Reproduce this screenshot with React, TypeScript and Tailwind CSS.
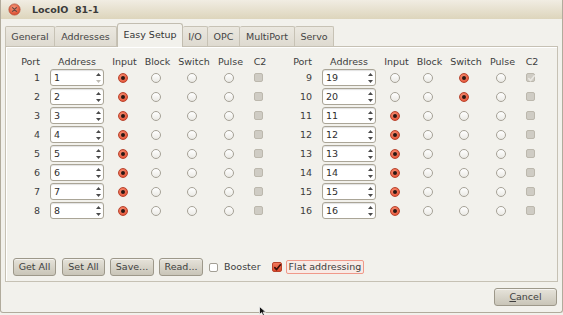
import React from "react";

const font = { fontFamily: '"DejaVu Sans", "Liberation Sans", sans-serif' };

function Radio({ on }: { on: boolean }) {
  if (on) {
    return (
      <span className="w-[10px] h-[10px] rounded-full border border-[#b9432c] bg-[radial-gradient(circle_at_40%_35%,#f88f74,#df4629)] flex items-center justify-center">
        <span className="w-[4px] h-[4px] rounded-full bg-[#2b1712]" />
      </span>
    );
  }
  return <span className="w-[10px] h-[10px] rounded-full border border-[#a6a297] bg-gradient-to-b from-white to-[#ebeae5]" />;
}

function Check({ color }: { color: string }) {
  return (
    <svg width="9" height="9" viewBox="0 0 9 9" className="absolute left-0 top-0">
      <path d="M1.8 4.6 L3.6 6.6 L7.4 1.8" fill="none" stroke={color} strokeWidth="1.6" strokeLinecap="round" strokeLinejoin="round" />
    </svg>
  );
}

function C2({ checked }: { checked?: boolean }) {
  return (
    <span className="relative w-[9px] h-[9px] rounded-[2px] border border-[#bcb8ad] bg-[#cfccc4] box-border">
      {checked && <Check color="#e9e7e1" />}
    </span>
  );
}

function Spin({ value, minDisabled }: { value: number; minDisabled?: boolean }) {
  return (
    <div className="flex h-[17px] w-[54px] rounded-[3px] border border-[#aaa597] bg-white shadow-[inset_0_1px_1px_rgba(0,0,0,0.12)]">
      <div className="flex-1 flex items-center pl-[3px] text-[9.5px] text-[#2e2e2e] leading-none">{value}</div>
      <div className="w-[9px] flex flex-col items-center justify-center gap-[4px] pr-[1px]">
        <svg width="5" height="3" viewBox="0 0 5 3"><path d="M0 3 L2.5 0 L5 3 Z" fill="#4a4a4a" /></svg>
        <svg width="5" height="3" viewBox="0 0 5 3"><path d="M0 0 L2.5 3 L5 0 Z" fill={minDisabled ? "#bdbab2" : "#4a4a4a"} /></svg>
      </div>
    </div>
  );
}

type Row = { port: number; addr: number; sel: number; c2?: boolean };

const cols = "grid grid-cols-[30px_56px_33px_33px_40px_33px_26px]";

function Group({ rows }: { rows: Row[] }) {
  return (
    <div className="flex flex-col w-[251px]">
      <div className={`${cols} h-[12px] items-center text-[9.5px] leading-none text-[#3d3d3d]`}>
        <div className="text-right pr-[10px]">Port</div>
        <div className="text-center pr-[2px]">Address</div>
        <div className="text-center pl-[4px]">Input</div>
        <div className="text-center pl-[4px]">Block</div>
        <div className="text-center pl-[4px]">Switch</div>
        <div className="text-center pl-[4px]">Pulse</div>
        <div className="text-center pl-[4px]">C2</div>
      </div>
      {rows.map((r) => (
        <div key={r.port} className={`${cols} h-[19px] items-center text-[9.5px] leading-none text-[#3d3d3d]`}>
          <div className="text-right pr-[10px]">{r.port}</div>
          <div><Spin value={r.addr} minDisabled={r.addr === 1} /></div>
          {[0, 1, 2, 3].map((i) => (
            <div key={i} className="flex justify-center">
              <Radio on={r.sel === i} />
            </div>
          ))}
          <div className="flex justify-center">
            <C2 checked={r.c2} />
          </div>
        </div>
      ))}
    </div>
  );
}

function Btn({ children, w }: { children: React.ReactNode; w: string }) {
  return (
    <div className={`${w} h-[18px] rounded-[3px] border border-[#9d988a] bg-gradient-to-b from-[#e6e3da] to-[#c9c5b8] flex items-center justify-center text-[9.5px] text-[#3f3f3f] leading-none shadow-[inset_0_1px_0_rgba(255,255,255,0.6)]`}>
      {children}
    </div>
  );
}

const tabs: { label: string; w: string; active?: boolean }[] = [
  { label: "General", w: "w-[50px]" },
  { label: "Addresses", w: "w-[62px]" },
  { label: "Easy Setup", w: "w-[66px]", active: true },
  { label: "I/O", w: "w-[25px]" },
  { label: "OPC", w: "w-[32px]" },
  { label: "MultiPort", w: "w-[55px]" },
  { label: "Servo", w: "w-[39px]" },
];

export default function App() {
  const left: Row[] = [1, 2, 3, 4, 5, 6, 7, 8].map((n) => ({ port: n, addr: n, sel: 0 }));
  const right: Row[] = [
    { port: 9, addr: 19, sel: 2, c2: true },
    { port: 10, addr: 20, sel: 2 },
    ...[11, 12, 13, 14, 15, 16].map((n) => ({ port: n, addr: n, sel: 0 })),
  ];
  return (
    <div style={font} className="relative w-[563px] h-[315px] bg-[#f2f1ec] overflow-hidden">
      <div className="flex flex-col w-[563px] h-[313px] border-l border-r border-b border-[#b1ab9c] rounded-b-[3px] bg-[#f2f1ec]">
        {/* title bar */}
        <div className="h-[19px] flex items-center bg-gradient-to-b from-[#f1ede3] to-[#ddd5bc] shrink-0">
          <svg width="13" height="13" viewBox="0 0 13 13" className="ml-[7px]">
            <defs>
              <radialGradient id="cb" cx="45%" cy="35%" r="65%">
                <stop offset="0%" stopColor="#f59a7c" />
                <stop offset="100%" stopColor="#d9472a" />
              </radialGradient>
            </defs>
            <circle cx="6.5" cy="6.5" r="5.6" fill="url(#cb)" stroke="#b8553c" strokeWidth="0.8" />
            <path d="M4.6 4.6 L8.4 8.4 M8.4 4.6 L4.6 8.4" stroke="#6b4a42" strokeWidth="1.3" strokeLinecap="round" />
          </svg>
          <div className="ml-[11px] text-[9.5px] font-bold text-[#3a3a3a] whitespace-pre leading-none">LocoIO  81-1</div>
        </div>
        {/* tabs */}
        <div className="h-[27px] flex items-end pl-[4px] shrink-0">
          {tabs.map((t) =>
            t.active ? (
              <div key={t.label} className={`${t.w} h-[24px] -mb-[1px] relative z-10 border border-b-0 border-[#c2bdb0] rounded-t-[3px] bg-[#f2f1ec] flex items-center justify-center text-[9.5px] text-[#333] leading-none pb-[1px]`}>
                {t.label}
              </div>
            ) : (
              <div key={t.label} className={`${t.w} h-[20px] border border-b-0 border-l-0 first:border-l border-[#c7c2b5] rounded-t-[2px] bg-gradient-to-b from-[#ebe8e0] to-[#dedad0] flex items-center justify-center text-[9.5px] text-[#444] leading-none pt-[1px]`}>
                {t.label}
              </div>
            )
          )}
        </div>
        {/* panel */}
        <div className="mx-[4px] h-[236px] border border-[#c6c1b4] shadow-[inset_1px_1px_0_#ffffff] flex flex-col shrink-0">
          <div className="pt-[9px] pl-[14px] flex gap-[21px]">
            <Group rows={left} />
            <Group rows={right} />
          </div>
          <div className="mt-auto pb-[5px] pl-[7px] flex items-center">
            <Btn w="w-[43px]">Get All</Btn>
            <div className="w-[6px]" />
            <Btn w="w-[43px]">Set All</Btn>
            <div className="w-[5px]" />
            <Btn w="w-[44px]">Save...</Btn>
            <div className="w-[5px]" />
            <Btn w="w-[44px]">Read...</Btn>
            <span className="ml-[6px] w-[9px] h-[9px] rounded-[2px] border border-[#a39f95] bg-white box-border" />
            <span className="ml-[6px] text-[9.5px] text-[#3d3d3d] leading-none">Booster</span>
            <span className="relative ml-[11px] w-[10px] h-[10px] rounded-[2px] border border-[#b9432c] bg-gradient-to-b from-[#f27a5c] to-[#dc4629] box-border">
              <Check color="#3b120b" />
            </span>
            <span className="ml-[4px] h-[14px] px-[2px] flex items-center rounded-[2px] border border-[#f0998a] bg-[#f8ebe6] text-[9.5px] text-[#3d3d3d] leading-none">
              Flat addressing
            </span>
          </div>
        </div>
        {/* bottom */}
        <div className="flex justify-end pr-[5px] mt-[6px]">
          <Btn w="w-[63px]">
            <span><span className="underline underline-offset-[1px]">C</span>ancel</span>
          </Btn>
        </div>
      </div>
      <svg width="8" height="11" viewBox="0 0 8 11" className="absolute left-[259px] top-[306px]">
        <path d="M0.5 0.5 L0.5 8.5 L2.6 6.6 L4 9.8 L5.4 9.2 L4.1 6.1 L6.8 6.1 Z" fill="#111" stroke="#fff" strokeWidth="0.7" />
      </svg>
    </div>
  );
}
